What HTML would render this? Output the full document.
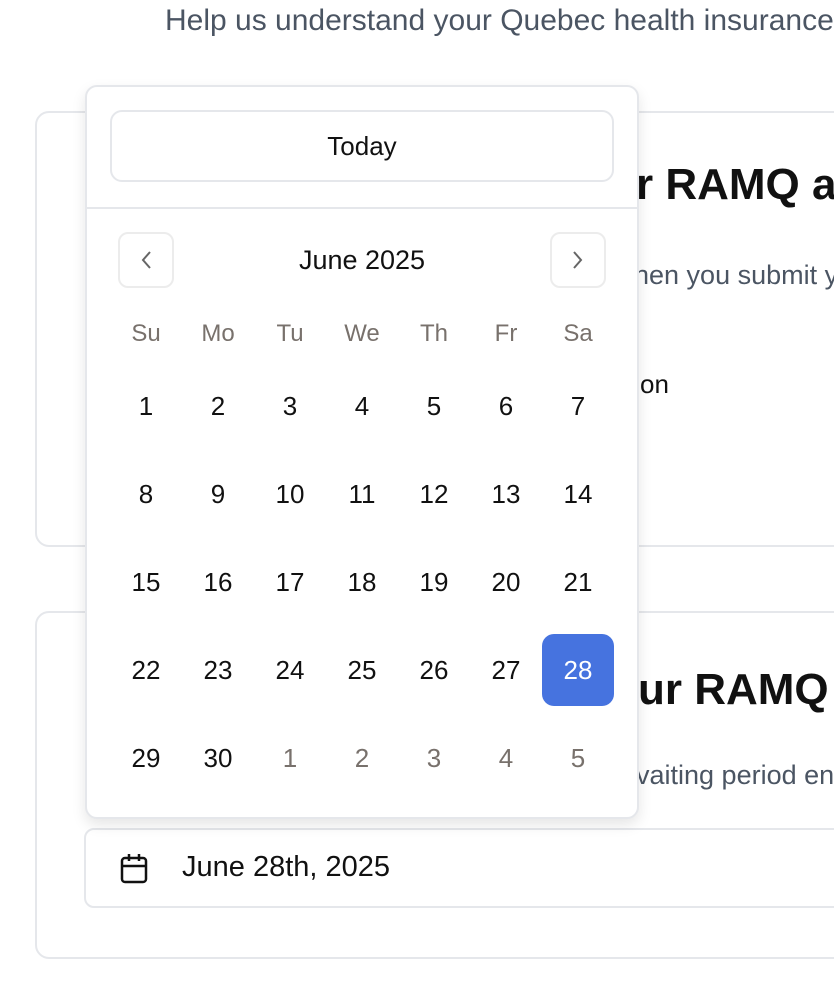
<!DOCTYPE html>
<html><head><style>
html{overflow:hidden}
body{margin:0;width:834px;height:986px;overflow:hidden;background:#fff;font-family:"Liberation Sans",sans-serif;position:relative}
#w{position:absolute;left:0;top:0;width:834px;height:986px;overflow:hidden}
.abs{position:absolute;white-space:nowrap}
.card{position:absolute;left:35px;width:820px;border:2px solid #e5e7eb;border-radius:14px;background:#fff}
.pop{position:absolute;left:85px;top:85px;width:554px;height:734px;box-sizing:border-box;border:2px solid #e5e7eb;border-radius:12px;background:#fff;box-shadow:0 6px 14px rgba(0,0,0,.10)}
.today{position:absolute;left:23px;top:23px;width:504px;height:72px;box-sizing:border-box;border:2px solid #e5e7eb;border-radius:12px;text-align:center;line-height:68px;font-size:26px;color:#111}
.div{position:absolute;left:0;right:0;top:120px;border-top:2px solid #e5e7eb}
.nav{position:absolute;top:145px;width:56px;height:56px;box-sizing:border-box;border:2px solid #ececec;border-radius:10px}
.cell{position:absolute;width:72px;height:72px;line-height:72px;text-align:center;font-size:26px;color:#111}
.wd{color:#78716c;font-size:24px}
.dim{color:#78716c}
.sel{background:#4673df;color:#fff;border-radius:12px}
</style></head><body><div id="w">
<div class="abs" style="left:165px;top:4px;font-size:30px;color:#4b5563">Help us understand your Quebec health insurance</div>
<div class="card" style="top:111px;height:432px"></div>
<div class="card" style="top:611px;height:344px"></div>
<div class="abs" style="left:636px;top:160px;font-size:44px;font-weight:bold;color:#111">r RAMQ application</div>
<div class="abs" style="left:634px;top:260px;font-size:27px;color:#4b5563">hen you submit your</div>
<div class="abs" style="left:640px;top:369px;font-size:26px;color:#111">on</div>
<div class="abs" style="left:638px;top:665px;font-size:44px;font-weight:bold;color:#111">ur RAMQ application</div>
<div class="abs" style="left:636px;top:760px;font-size:27px;color:#4b5563">vaiting period ends</div>
<div style="position:absolute;left:84px;top:828px;width:800px;height:76px;border:2px solid #e5e7eb;border-radius:10px"></div>
<svg class="abs" style="left:119px;top:853px" width="30" height="32" viewBox="0 0 30 32"><rect x="3" y="5" width="24" height="24" rx="3" fill="none" stroke="#111" stroke-width="2.5"/><line x1="3" y1="13" x2="27" y2="13" stroke="#111" stroke-width="2.5"/><line x1="10" y1="1" x2="10" y2="8" stroke="#111" stroke-width="2.5"/><line x1="20" y1="1" x2="20" y2="8" stroke="#111" stroke-width="2.5"/></svg>
<div class="abs" style="left:182px;top:851px;font-size:29px;color:#111">June 28th, 2025</div>
<div class="pop">
<div class="today">Today</div>
<div class="div"></div>
<div class="nav" style="left:31px"><svg width="52" height="52"><path d="M30 18 L23 26 L30 34" fill="none" stroke="#666" stroke-width="2"/></svg></div>
<div class="nav" style="left:463px"><svg width="52" height="52"><path d="M22 18 L29 26 L22 34" fill="none" stroke="#666" stroke-width="2"/></svg></div>
<div class="abs" style="left:0;width:550px;top:158px;text-align:center;font-size:27px;color:#111">June 2025</div>
<div id="g"></div>
</div>
</div>
<script>
var g=document.getElementById('g'),h='';
var wd=['Su','Mo','Tu','We','Th','Fr','Sa'];
for(var i=0;i<7;i++)h+='<div class="cell wd" style="left:'+(23+72*i)+'px;top:211px">'+wd[i]+'</div>';
for(var r=0;r<5;r++)for(var c=0;c<7;c++){var n=r*7+c+1,cls='cell',t=n;if(n>30){t=n-30;cls+=' dim'}if(n==28)cls+=' sel';
h+='<div class="'+cls+'" style="left:'+(23+72*c)+'px;top:'+(283+88*r)+'px">'+t+'</div>';}
g.innerHTML=h;
</script>
</body></html>
